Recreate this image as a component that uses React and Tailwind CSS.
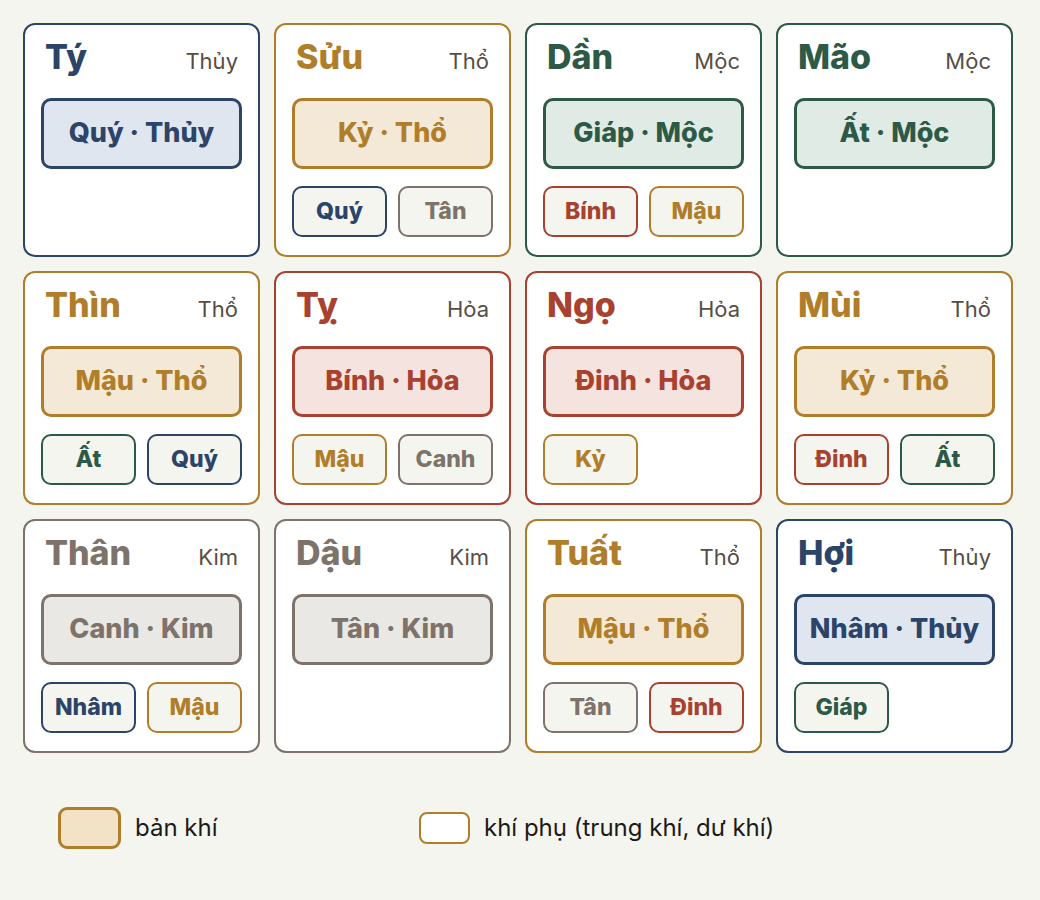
import React from 'react';

const palette = {
  thuy: { text: 'text-[#2c4468]', border: 'border-[#2c4468]', soft: 'bg-[#e0e6f0]' },
  tho: { text: 'text-[#b07d2a]', border: 'border-[#b07d2a]', soft: 'bg-[#f3e9d6]' },
  moc: { text: 'text-[#2d5a46]', border: 'border-[#2d5a46]', soft: 'bg-[#e1ebe5]' },
  hoa: { text: 'text-[#a8412f]', border: 'border-[#a8412f]', soft: 'bg-[#f5e3df]' },
  kim: { text: 'text-[#7d736b]', border: 'border-[#7d736b]', soft: 'bg-[#eae8e5]' },
};

const branches = [
  { name: 'Tý', element: 'Thủy', kind: 'thuy', main: 'Quý · Thủy', extra: [] },
  { name: 'Sửu', element: 'Thổ', kind: 'tho', main: 'Kỷ · Thổ', extra: [['Quý', 'thuy'], ['Tân', 'kim']] },
  { name: 'Dần', element: 'Mộc', kind: 'moc', main: 'Giáp · Mộc', extra: [['Bính', 'hoa'], ['Mậu', 'tho']] },
  { name: 'Mão', element: 'Mộc', kind: 'moc', main: 'Ất · Mộc', extra: [] },
  { name: 'Thìn', element: 'Thổ', kind: 'tho', main: 'Mậu · Thổ', extra: [['Ất', 'moc'], ['Quý', 'thuy']] },
  { name: 'Tỵ', element: 'Hỏa', kind: 'hoa', main: 'Bính · Hỏa', extra: [['Mậu', 'tho'], ['Canh', 'kim']] },
  { name: 'Ngọ', element: 'Hỏa', kind: 'hoa', main: 'Đinh · Hỏa', extra: [['Kỷ', 'tho']] },
  { name: 'Mùi', element: 'Thổ', kind: 'tho', main: 'Kỷ · Thổ', extra: [['Đinh', 'hoa'], ['Ất', 'moc']] },
  { name: 'Thân', element: 'Kim', kind: 'kim', main: 'Canh · Kim', extra: [['Nhâm', 'thuy'], ['Mậu', 'tho']] },
  { name: 'Dậu', element: 'Kim', kind: 'kim', main: 'Tân · Kim', extra: [] },
  { name: 'Tuất', element: 'Thổ', kind: 'tho', main: 'Mậu · Thổ', extra: [['Tân', 'kim'], ['Đinh', 'hoa']] },
  { name: 'Hợi', element: 'Thủy', kind: 'thuy', main: 'Nhâm · Thủy', extra: [['Giáp', 'moc']] },
];

function BranchCard({ branch }) {
  const c = palette[branch.kind];
  return (
    <div className={`w-[237px] h-[234px] border-2 rounded-[12px] bg-white px-4 pt-3 ${c.border}`}>
      <div className="flex items-baseline justify-between px-1">
        <span className={`text-[34px] font-extrabold leading-[40px] ${c.text}`}>{branch.name}</span>
        <span className="text-[22px] text-[#574d45]">{branch.element}</span>
      </div>

      <div className={`mt-5 h-[71px] border-[3px] rounded-[10px] flex items-center justify-center text-[27px] font-extrabold ${c.border} ${c.soft} ${c.text}`}>
        {branch.main}
      </div>

      {branch.extra.length > 0 && (
        <div className="mt-[17px] flex gap-[11px]">
          {branch.extra.map(([stem, kind]) => {
            const k = palette[kind];
            return (
              <div
                key={stem}
                className={`w-[95px] h-[51px] border-2 rounded-[10px] bg-[#f5f5f0] flex items-center justify-center text-[23px] font-extrabold ${k.border} ${k.text}`}
              >
                {stem}
              </div>
            );
          })}
        </div>
      )}
    </div>
  );
}

export default function App() {
  return (
    <div className="min-h-[900px] bg-[#f5f5f0] font-['Inter',sans-serif]">
      <div className="p-[23px] pb-0 grid grid-cols-[repeat(4,237px)] gap-[14px]">
        {branches.map((b) => (
          <BranchCard key={b.name} branch={b} />
        ))}
      </div>

      <div className="mt-[54px] pl-[58px] flex items-center text-[24px] text-[#1c1a18]">
        <div className="w-[361px] flex items-center gap-[14px]">
          <div className="w-[63px] h-[42px] border-[3px] border-[#b07d2a] rounded-[9px] bg-[#f2e3c6]" />
          <span>bản khí</span>
        </div>
        <div className="flex items-center gap-[14px]">
          <div className="w-[51px] h-[32px] border-2 border-[#b07d2a] rounded-[8px] bg-white" />
          <span>khí phụ (trung khí, dư khí)</span>
        </div>
      </div>
    </div>
  );
}
